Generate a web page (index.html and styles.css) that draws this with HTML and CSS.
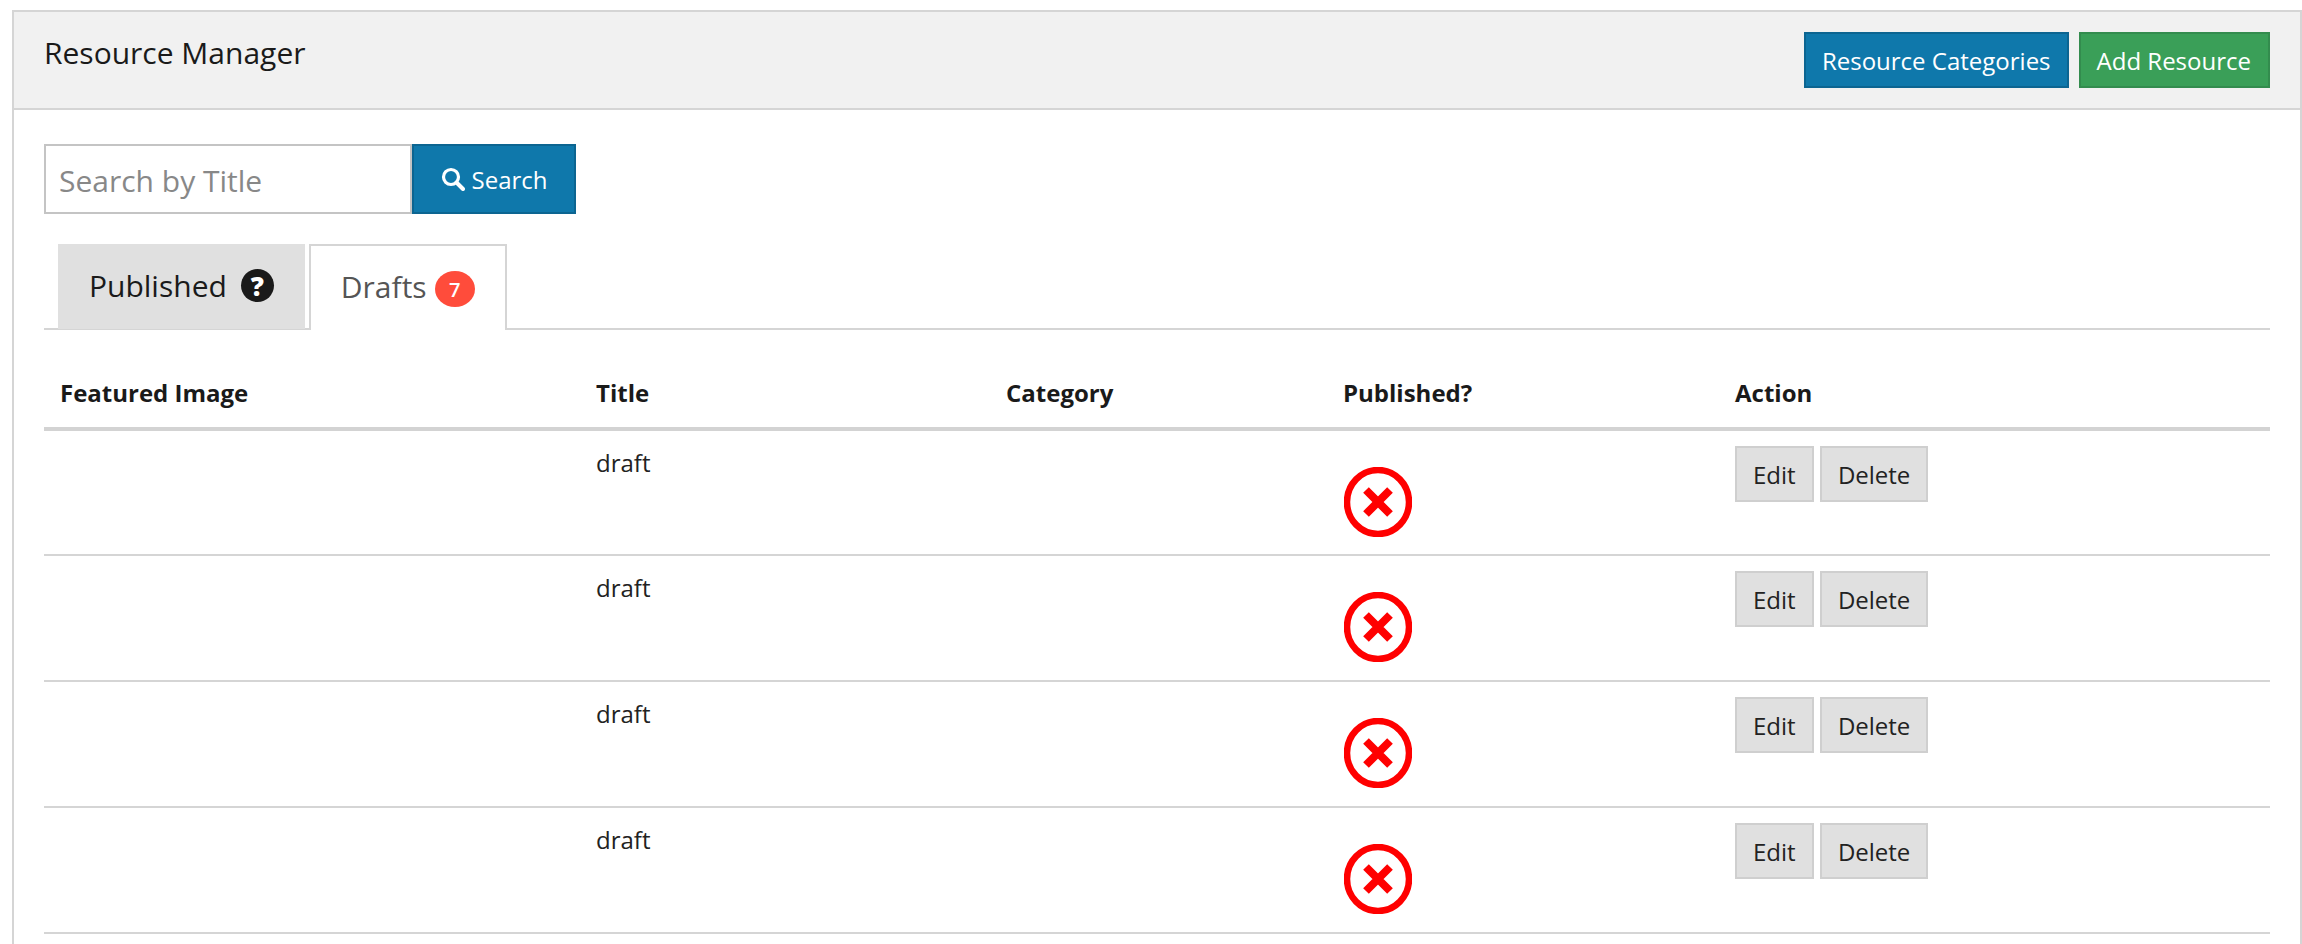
FILE: index.html
```html
<!DOCTYPE html>
<html lang="en">

<head>
    <meta charset="UTF-8">
    <meta name="viewport" content="width=device-width, initial-scale=1.0">
    <title>Resource Manager</title>
    <link rel="stylesheet" href="styles.css">
</head>

<body>
    <div class="panel">
        <div class="panel-head">
            <h3 class="panel-title">Resource Manager</h3>
            <div class="head-actions">
                <a class="btn btn-blue" href="#">Resource Categories</a>
                <a class="btn btn-green" href="#">Add Resource</a>
            </div>
        </div>

        <div class="panel-body">
            <form class="search-form">
                <input class="search-input" type="text" placeholder="Search by Title">
                <button class="btn btn-blue search-btn" type="button">
                    <svg class="search-icon" viewBox="0 0 24 24" width="24" height="24">
                        <circle cx="10" cy="10" r="7.5" fill="none" stroke="#fff" stroke-width="3.2"></circle>
                        <path d="M15.5 15.5 L22 22" fill="none" stroke="#fff" stroke-width="4" stroke-linecap="round"></path>
                    </svg>
                    Search
                </button>
            </form>

            <ul class="tabs">
                <li class="tab">
                    Published
                    <span class="help-icon">?</span>
                </li>
                <li class="tab tab-active">
                    Drafts
                    <span class="badge">7</span>
                </li>
            </ul>

            <table class="resources">
                <colgroup>
                    <col class="col-image">
                    <col class="col-title">
                    <col class="col-category">
                    <col class="col-published">
                    <col class="col-action">
                </colgroup>
                <thead>
                    <tr>
                        <th>Featured Image</th>
                        <th>Title</th>
                        <th>Category</th>
                        <th>Published?</th>
                        <th>Action</th>
                    </tr>
                </thead>
                <tbody>
                    <tr>
                        <td></td>
                        <td>draft</td>
                        <td></td>
                        <td>
                            <svg class="no-icon" viewBox="0 0 68 70" width="68" height="70">
                                <ellipse cx="34" cy="35" rx="31" ry="32" fill="none" stroke="#ff0000" stroke-width="6.5"></ellipse>
                                <path d="M22 23 L46 47 M46 23 L22 47" fill="none" stroke="#ff0000" stroke-width="8"></path>
                            </svg>
                        </td>
                        <td class="row-actions">
                            <a class="btn btn-grey" href="#">Edit</a>
                            <a class="btn btn-grey" href="#">Delete</a>
                        </td>
                    </tr>
                    <tr>
                        <td></td>
                        <td>draft</td>
                        <td></td>
                        <td>
                            <svg class="no-icon" viewBox="0 0 68 70" width="68" height="70">
                                <ellipse cx="34" cy="35" rx="31" ry="32" fill="none" stroke="#ff0000" stroke-width="6.5"></ellipse>
                                <path d="M22 23 L46 47 M46 23 L22 47" fill="none" stroke="#ff0000" stroke-width="8"></path>
                            </svg>
                        </td>
                        <td class="row-actions">
                            <a class="btn btn-grey" href="#">Edit</a>
                            <a class="btn btn-grey" href="#">Delete</a>
                        </td>
                    </tr>
                    <tr>
                        <td></td>
                        <td>draft</td>
                        <td></td>
                        <td>
                            <svg class="no-icon" viewBox="0 0 68 70" width="68" height="70">
                                <ellipse cx="34" cy="35" rx="31" ry="32" fill="none" stroke="#ff0000" stroke-width="6.5"></ellipse>
                                <path d="M22 23 L46 47 M46 23 L22 47" fill="none" stroke="#ff0000" stroke-width="8"></path>
                            </svg>
                        </td>
                        <td class="row-actions">
                            <a class="btn btn-grey" href="#">Edit</a>
                            <a class="btn btn-grey" href="#">Delete</a>
                        </td>
                    </tr>
                    <tr>
                        <td></td>
                        <td>draft</td>
                        <td></td>
                        <td>
                            <svg class="no-icon" viewBox="0 0 68 70" width="68" height="70">
                                <ellipse cx="34" cy="35" rx="31" ry="32" fill="none" stroke="#ff0000" stroke-width="6.5"></ellipse>
                                <path d="M22 23 L46 47 M46 23 L22 47" fill="none" stroke="#ff0000" stroke-width="8"></path>
                            </svg>
                        </td>
                        <td class="row-actions">
                            <a class="btn btn-grey" href="#">Edit</a>
                            <a class="btn btn-grey" href="#">Delete</a>
                        </td>
                    </tr>
                </tbody>
            </table>
        </div>
    </div>
</body>

</html>
```

FILE: styles.css
```css
html,
body {
    height: 944px;
    overflow: hidden;
}

body {
    margin: 0;
    padding: 10px 0 0 12px;
    box-sizing: border-box;
    background-color: #fff;
    color: #1a1a1a;
    font-family: "Open Sans", sans-serif;
}

.panel {
    border: 2px solid #d5d5d5;
    border-bottom: none;
    min-height: 960px;
}

.panel-head {
    display: flex;
    justify-content: space-between;
    height: 96px;
    padding: 0 30px;
    background-color: #f1f1f1;
    border-bottom: 2px solid #d5d5d5;
}

.panel-title {
    margin: 21px 0 0;
    font-size: 30px;
    line-height: 40px;
    font-weight: 400;
}

.head-actions {
    display: flex;
    gap: 10px;
    padding-top: 20px;
}

.btn {
    display: inline-flex;
    align-items: center;
    justify-content: center;
    box-sizing: border-box;
    height: 56px;
    padding: 0 16px;
    border: 2px solid;
    font-size: 24px;
    text-decoration: none;
    font-family: inherit;
}

.btn-blue {
    background-color: #0f78ab;
    border-color: #0c6591;
    color: #fff;
}

.btn-green {
    padding: 0 17px 0 16px;
    background-color: #3a9f58;
    border-color: #338c4e;
    color: #fff;
}

.btn-grey {
    background-color: #e0e0e0;
    border-color: #cfcfcf;
    color: #222;
}

.panel-body {
    padding: 34px 30px 0;
}

.search-form {
    display: flex;
    margin: 0;
}

.search-input {
    box-sizing: border-box;
    width: 368px;
    height: 70px;
    padding: 2px 13px 0;
    border: 2px solid #c4c4c4;
    border-radius: 0;
    font-family: inherit;
    font-size: 30px;
    color: #222;
    outline: none;
}

.search-input::placeholder {
    color: #888;
    opacity: 1;
}

.search-btn {
    width: 164px;
    height: 70px;
    padding: 0;
    gap: 7px;
}

.search-icon {
    flex: none;
}

.tabs {
    display: flex;
    list-style: none;
    margin: 30px 0 0;
    padding: 0 0 0 14px;
    gap: 4px;
    height: 84px;
    border-bottom: 2px solid #d5d5d5;
}

.tab {
    display: flex;
    align-items: center;
    gap: 14px;
    box-sizing: border-box;
    height: 85px;
    padding: 0 31px 2px;
    background-color: #e0e0e0;
    font-size: 30px;
    color: #1a1a1a;
}

.tab-active {
    height: 86px;
    padding: 0 30px 4px;
    background-color: #fff;
    border: 2px solid #d5d5d5;
    border-bottom: none;
    color: #555;
    gap: 8px;
}

.help-icon {
    display: flex;
    align-items: center;
    justify-content: center;
    width: 33px;
    height: 33px;
    border-radius: 50%;
    background-color: #1a1a1a;
    color: #fff;
    font-size: 26px;
    font-weight: 800;
}

.badge {
    display: flex;
    align-items: center;
    justify-content: center;
    width: 40px;
    height: 36px;
    margin-top: 6px;
    border-radius: 50%;
    background-color: #ff4c3b;
    color: #fff;
    font-size: 20px;
    font-weight: 600;
}

.resources {
    width: 2226px;
    table-layout: fixed;
    border-collapse: collapse;
    font-size: 24px;
}

.col-image {
    width: 536px;
}

.col-title {
    width: 410px;
}

.col-category {
    width: 337px;
}

.col-published {
    width: 392px;
}

.col-action {
    width: 551px;
}

.resources th {
    height: 99px;
    padding: 0 16px 18px;
    box-sizing: border-box;
    vertical-align: bottom;
    text-align: left;
    font-weight: 700;
    border-bottom: 4px solid #d3d3d3;
}

.resources td {
    height: 126px;
    padding: 15px 16px 0;
    box-sizing: border-box;
    vertical-align: top;
    border-bottom: 2px solid #d5d5d5;
    color: #222;
}

.no-icon {
    display: block;
    margin: 21px 0 0 1px;
}
```
